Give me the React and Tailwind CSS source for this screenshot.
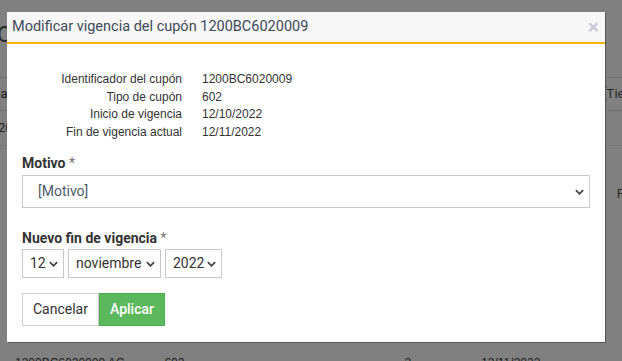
import React from 'react'

const Chevron = ({ className = '' }) => (
  <svg viewBox="0 0 10 6" className={`w-[9px] h-[6px] pointer-events-none ${className}`}>
    <polyline points="1,1 5,5 9,1" fill="none" stroke="#444" strokeWidth="2" />
  </svg>
)

const SelectBox = ({ value, className = '', textClass = '' }) => (
  <div className={`relative flex items-center border border-[#c8c8c8] bg-white ${className}`}>
    <span className={`text-[14px] ${textClass}`}>{value}</span>
    <Chevron className="absolute right-[5px] top-1/2 -translate-y-1/2" />
  </div>
)

const info = [
  ['Identificador del cupón', '1200BC6020009'],
  ['Tipo de cupón', '602'],
  ['Inicio de vigencia', '12/10/2022'],
  ['Fin de vigencia actual', '12/11/2022'],
]

const App = () => {
  return (
    <div className="relative w-[622px] h-[361px] overflow-hidden bg-[#808080] font-['Roboto',sans-serif]">
      {/* dimmed page behind the dialog */}
      <div className="flex flex-col text-[#1e1e1e]">
        <div className="h-[77px] pt-[18px] -ml-[3px] text-[22px] text-[#2a2a2a]">Operaciones</div>
        <div className="h-[33px] border-t border-[#6e6e6e] flex items-center justify-between text-[13px]">
          <span className="-ml-[8px]">Canal</span>
          <span className="mr-[-32px] text-[#2a2a2a]">[Tiempo]</span>
        </div>
        <div className="h-[35px] border-t border-[#6e6e6e] flex items-center text-[13px]">
          <span className="-ml-[2px]">2022</span>
        </div>
        <div className="h-[66px] border-t border-[#767676] flex items-end justify-end text-[13px] pb-[8px]">
          <span className="mr-[-2px] text-[#2a2a2a]">F</span>
        </div>
        <div className="h-[143px]" />
        <div className="flex text-[12px] font-['Liberation_Sans',sans-serif] text-[#1a1a1a]">
          <span className="ml-[15px]">1200BC6020009 AC</span>
          <span className="ml-[40px]">602</span>
          <span className="ml-[220px]">2</span>
          <span className="ml-[70px]">12/11/2022</span>
        </div>
      </div>

      {/* dialog */}
      <div className="absolute left-[7px] top-[12px] w-[598px] h-[330px] bg-white shadow-[1px_1px_0_#555] flex flex-col">
        <div className="h-[32px] shrink-0 bg-[#f7f7f7] border-b-2 border-[#ffb400] flex items-center justify-between pl-[5px] pr-[6px]">
          <span className="text-[14.5px] text-[#3d4958] leading-none">Modificar vigencia del cupón 1200BC6020009</span>
          <span className="text-[21px] font-bold text-[#cdc7d6] leading-none">×</span>
        </div>

        <div className="flex flex-col px-[15px]">
          <div className="mt-[27px] grid grid-cols-[160px_1fr] gap-x-[20px] font-['Liberation_Sans',sans-serif] text-[12px] leading-[17.5px] text-[#333]">
            {info.map(([label, value]) => (
              <React.Fragment key={label}>
                <span className="text-right">{label}</span>
                <span>{value}</span>
              </React.Fragment>
            ))}
          </div>

          <label className="mt-[13px] text-[14px] font-bold text-[#333] leading-[18px]">
            Motivo <span className="text-[#777] font-normal">*</span>
          </label>
          <SelectBox value="[Motivo]" className="mt-[3px] h-[33px] w-[568px] pl-[15px]" textClass="text-[#4d5a69]" />

          <label className="mt-[21px] text-[14px] font-bold text-[#333] leading-[18px]">
            Nuevo fin de vigencia <span className="text-[#777] font-normal">*</span>
          </label>
          <div className="mt-[2px] flex gap-[4px]">
            <SelectBox value="12" className="h-[29px] w-[42px] pl-[7px]" textClass="text-[#333]" />
            <SelectBox value="noviembre" className="h-[29px] w-[93px] pl-[7px]" textClass="text-[#333]" />
            <SelectBox value="2022" className="h-[29px] w-[57px] pl-[7px]" textClass="text-[#333]" />
          </div>

          <div className="mt-[15px] flex">
            <button className="h-[33px] w-[77px] border border-[#cccccc] bg-white text-[14px] text-[#333]">Cancelar</button>
            <button className="h-[33px] w-[66px] border border-[#4cae4c] bg-[#5cb85c] text-[14px] font-medium text-white">Aplicar</button>
          </div>
        </div>
      </div>
    </div>
  )
}

export default App
